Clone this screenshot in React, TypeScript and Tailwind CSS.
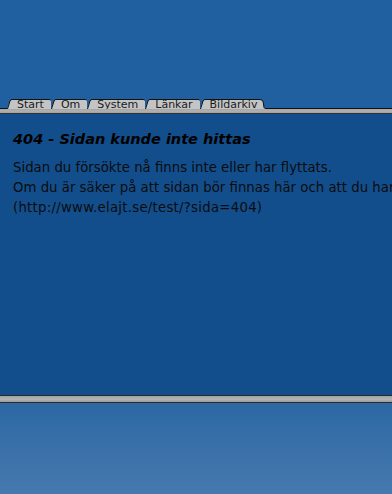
import React from "react";

const tabs = ["Start", "Om", "System", "Länkar", "Bildarkiv"];

// Slanted left edge of a tab, drawn over the previous tab
const TabEdgeLeft: React.FC = () => (
  <svg width="5" height="10" viewBox="0 0 5 10" className="block shrink-0">
    <path d="M0 10 L3 2 Q3.6 0.5 5 0.5 L5 10 Z" fill="#c4c4c4" />
    <path d="M0.5 10 L3 2 Q3.6 0.5 5 0.5" fill="none" stroke="#111" strokeWidth="1" />
  </svg>
);

// Rounded right end of the last tab, running into the baseline
const TabEdgeRight: React.FC = () => (
  <svg width="6" height="10" viewBox="0 0 6 10" className="block shrink-0">
    <path d="M0 0.5 Q2.6 0.5 3.2 3 L4 8.5 Q4.4 9.5 6 9.5 L6 10 L0 10 Z" fill="#c4c4c4" />
    <path d="M0 0.5 Q2.6 0.5 3.2 3 L4 8.5 Q4.4 9.5 6 9.5" fill="none" stroke="#111" strokeWidth="1" />
  </svg>
);

export default function App() {
  return (
    <div className="h-screen w-full flex flex-col overflow-hidden font-['DejaVu_Sans',Verdana,sans-serif]">
      {/* Top band */}
      <div className="h-[99px] shrink-0 bg-[#2060a0]" />

      {/* Tab strip */}
      <div className="h-[10px] shrink-0 flex bg-[#2060a0]">
        <div className="w-[7px] border-b border-[#111]" />
        {tabs.map((tab, i) => (
          <div key={tab} className="flex h-full">
            <TabEdgeLeft />
            <div
              className={
                "h-full border-t border-[#111] bg-[#c4c4c4] pl-[5px] text-[11px] leading-[9px] text-[#1a1a1a] whitespace-nowrap " +
                (i === tabs.length - 1 ? "pr-[3px]" : "pr-[7px] rounded-tr-[2px]")
              }
            >
              {tab}
            </div>
            {i === tabs.length - 1 && <TabEdgeRight />}
          </div>
        ))}
        <div className="flex-1 border-b border-[#111]" />
      </div>

      {/* Grey rail under the tabs */}
      <div className="h-[5px] shrink-0 bg-gradient-to-b from-[#a4a4a4] via-[#b2b2b2] to-[#a0a0a0] border-b border-[#333]" />

      {/* Content */}
      <div className="h-[281px] shrink-0 bg-[#124e8c] pl-[13px] pt-[16px] whitespace-nowrap">
        <h1 className="text-[14.5px] leading-[18px] font-bold italic text-black">404 - Sidan kunde inte hittas</h1>
        <div className="mt-[10px] text-[13.3px] leading-[20px] text-[#0c0c0c]">
          <p>Sidan du försökte nå finns inte eller har flyttats.</p>
          <p>Om du är säker på att sidan bör finnas här och att du har skrivit rätt adress, kontakta webmastern.</p>
          <p className="tracking-[0.25px]">(http://www.elajt.se/test/?sida=404)</p>
        </div>
      </div>

      {/* Bottom rail */}
      <div className="h-[8px] shrink-0 border-y border-[#2a2a2a] bg-gradient-to-b from-[#a0a0a0] via-[#b4b4b4] to-[#9c9c9c]" />

      {/* Bottom band */}
      <div className="flex-1 bg-gradient-to-b from-[#2c68a4] to-[#4679ae]" />
    </div>
  );
}
